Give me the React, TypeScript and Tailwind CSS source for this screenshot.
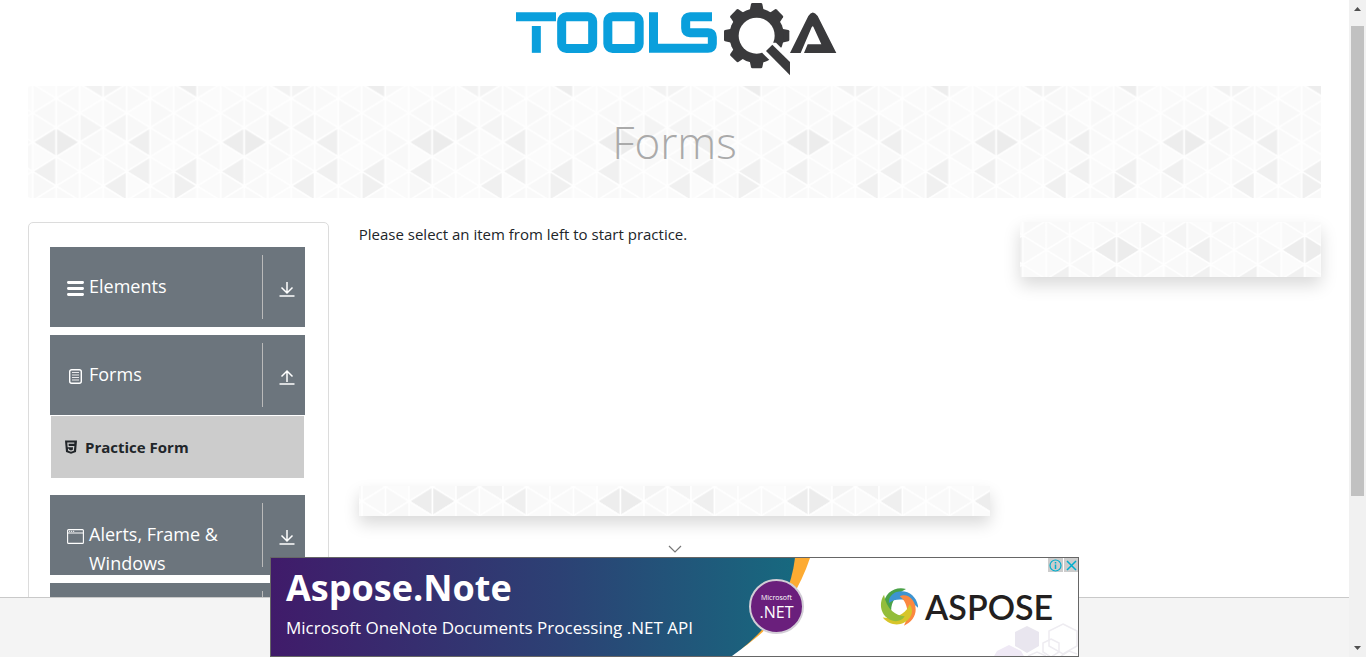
import React from "react";

const COL = 23.5;
const HALF = 14.6;

const shades: Record<string, string> = {
  "0,0,L": "#ededed",
  "1,0,R": "#ececec",
  "4,0,L": "#efefef",
  "0,2,L": "#f0f0f0",
  "4,2,L": "#f0f0f0",
  "6,2,L": "#f0f0f0",
  "3,3,L": "#f0f0f0",
  "6,3,L": "#f0f0f0",
  "6,3,R": "#f0f0f0",
  "2,-1,R": "#f4f4f4",
  "3,-1,L": "#f4f4f4",
  "2,-4,L": "#f2f2f2",
  "3,-4,R": "#f3f3f3",
  "6,-4,L": "#ededed",
};
const lightShades = ["#f9f9f9", "#fafafa", "#f9f9f9", "#fbfbfb", "#f8f8f8"];

const triangles: { points: string; fill: string }[] = [];
for (let c = 0; c < 8; c++) {
  for (let r = -5; r <= 6; r++) {
    const left = Math.abs(r) % 2 === c % 2;
    const apexX = left ? c * COL : (c + 1) * COL;
    const baseX = left ? (c + 1) * COL : c * COL;
    const y = (r + 6) * HALF;
    const key = `${c},${r},${left ? "L" : "R"}`;
    triangles.push({
      points: `${apexX},${y} ${baseX},${y - HALF} ${baseX},${y + HALF}`,
      fill: shades[key] ?? lightShades[(c * 7 + (r + 5) * 3 + c * r * r) % 5],
    });
  }
}

function TrianglePattern({ id, x, y }: { id: string; x: number; y: number }) {
  return (
    <svg className="absolute inset-0 h-full w-full" aria-hidden="true">
      <defs>
        <pattern id={id} x={x} y={y - 6 * HALF} width={COL * 8} height={HALF * 12} patternUnits="userSpaceOnUse">
          <rect width="188" height="176" fill="#fbfbfb" />
          {triangles.map((t) => (
            <polygon key={t.points} points={t.points} fill={t.fill} stroke="#fff" strokeWidth="1.6" />
          ))}
        </pattern>
      </defs>
      <rect width="100%" height="100%" fill={`url(#${id})`} />
    </svg>
  );
}

function ToolsQaLogo() {
  return (
    <svg viewBox="0 0 1050 252" className="h-[84px] w-[350px]" role="img" aria-label="ToolsQA">
      <g fill="none" stroke="#0a9fdc" strokeWidth="27">
        <path d="M48 50.500H168" />
        <path d="M109 78V158.500" />
        <rect x="185" y="50.500" width="93" height="95" rx="14" />
        <rect x="323.500" y="50.500" width="94" height="95" rx="14" />
        <path d="M460.500 37V145H624Q637 145 637 132V111Q637 98 624 98H570Q557 98 557 85V64Q557 50.500 570 50.500H636" />
      </g>
      <g fill="#3a3a3c">
        {[0, 45, 90, 135, 180, 225, 270, 315].map((a) => (
          <path key={a} d="M749 32L753 12Q754 9 757 9H783Q786 9 787 12L791 32Z" transform={`rotate(${a} 770 107)`} />
        ))}
        <circle cx="770" cy="107" r="82" />
      </g>
      <circle cx="770" cy="107" r="54" fill="#fff" />
      <path d="M805 128L828 128L880 180V250L786 158Z" fill="#fff" />
      <path d="M817 134L870 186V226L798 153Z" fill="#3a3a3c" />
      <path
        d="M870 159L925 48Q938 27 953 48L1009 159H912L923 133H964L940 80Q938 76 935 82L902 159Z"
        fill="#3a3a3c"
      />
    </svg>
  );
}

function ArrowIcon({ up = false }: { up?: boolean }) {
  return (
    <svg viewBox="0 0 16 16" className="h-4 w-4" fill="none" stroke="#fff" strokeWidth="1.5" aria-hidden="true">
      {up ? <path d="M8 13V2M2.500 7.500L8 2L13.500 7.500" /> : <path d="M8 1V12M2.500 6.500L8 12L13.500 6.500" />}
      <path d="M.5 15H15.500" />
    </svg>
  );
}

const BarsIcon = () => (
  <svg viewBox="0 0 17 17" className="h-[17px] w-[17px]" stroke="#fff" strokeWidth="2.8" strokeLinecap="round" aria-hidden="true">
    <path d="M1.400 2.500H15.600M1.400 8.500H15.600M1.400 14.500H15.600" />
  </svg>
);

const DocIcon = () => (
  <svg viewBox="0 0 17 17" className="h-[17px] w-[17px]" fill="none" stroke="#fff" aria-hidden="true">
    <rect x="2.700" y="1.700" width="11.600" height="13.600" rx="2" strokeWidth="1.400" />
    <path d="M5 4.500H12M5 7H12M5 9.500H12M5 12H12" strokeWidth="1.1" opacity=".85" />
  </svg>
);

const WindowIcon = () => (
  <svg viewBox="0 0 17 17" className="h-[17px] w-[17px]" fill="none" stroke="#fff" aria-hidden="true">
    <rect x=".6" y="1.600" width="15.800" height="13.800" rx="1" strokeWidth="1.100" />
    <path d="M.6 5H16.400" />
    <path d="M2 3.300H8" strokeDasharray="1.200 .8" />
  </svg>
);

const Html5Icon = () => (
  <svg viewBox="0 0 12 14" className="h-[14px] w-3" aria-hidden="true">
    <path d="M0 .5H12L11 12L6 13.700L1 12Z" fill="#212529" />
    <path d="M9.300 3.200H2.900L3.200 6.700H8.700L8.300 10.300L6 11L3.700 10.300L3.500 8.700" fill="none" stroke="#ccc" strokeWidth="1.200" />
  </svg>
);

function GroupHeader({ icon, label, open = false }: { icon: React.ReactNode; label: string; open?: boolean }) {
  return (
    <button
      type="button"
      aria-expanded={open}
      className="flex h-20 w-full shrink-0 items-center overflow-hidden bg-[#6c757d] pl-[17px] text-left text-white"
    >
      <span className="flex flex-1 items-start gap-[5px] self-stretch pt-[25px]">
        <span className="mt-2 shrink-0">{icon}</span>
        <span className="text-[18px] leading-[29px]">{label}</span>
      </span>
      <span className="flex h-16 w-[43px] items-center justify-center border-l border-[#bababa] pt-1 pl-[7px]">
        <ArrowIcon up={open} />
      </span>
    </button>
  );
}

function Sidebar() {
  return (
    <nav className="flex flex-col gap-2 rounded-[5px] border border-[#dcdcdc] pt-6 pr-[23px] pb-6 pl-[21px]">
      <GroupHeader icon={<BarsIcon />} label="Elements" />
      <div>
        <GroupHeader icon={<DocIcon />} label="Forms" open />
        <ul className="mb-2 p-px">
          <li>
            <a href="#practice-form" className="flex h-[62px] items-center gap-2 bg-[#ccc] pl-[14px] text-[15px] font-bold text-[#212529]">
              <Html5Icon />
              Practice Form
            </a>
          </li>
        </ul>
      </div>
      <GroupHeader icon={<WindowIcon />} label="Alerts, Frame & Windows" />
      <GroupHeader icon={<WindowIcon />} label="Widgets" />
    </nav>
  );
}

const swirlColors = ["#4aa147", "#3d94d1", "#fb8840", "#d7c52a", "#93bd3b"];

function AsposeSwirl() {
  return (
    <svg viewBox="0 0 114 114" className="h-[38px] w-[38px]" aria-hidden="true">
      {swirlColors.map((color, i) => (
        <path
          key={color}
          d="M78 3C44-6 12 16 12 50C12 64 20 78 36 82C28 56 40 22 78 3Z"
          fill={color}
          transform={`rotate(${i * 72} 57 57)`}
        />
      ))}
    </svg>
  );
}

function AdBanner() {
  return (
    <aside className="relative flex h-[100px] w-[809px] overflow-hidden border border-[#666] bg-white text-white" aria-label="Advertisement">
      <svg viewBox="0 0 807 98" className="absolute inset-0 h-full w-full" aria-hidden="true">
        <defs>
          <linearGradient id="adFill" x1="0" x2="1" y1="0" y2="0">
            <stop offset="0" stopColor="#401b6a" />
            <stop offset=".55" stopColor="#2c4174" />
            <stop offset="1" stopColor="#17697f" />
          </linearGradient>
        </defs>
        <path d="M524 0H539C526 38 506 66 470 91Z" fill="#fdab32" />
        <path d="M0 0H524C519 40 500 70 461 98H0Z" fill="url(#adFill)" />
        <path d="M756 68L768 74V88L756 95L744 88V74Z" fill="#e9e6ef" />
        <path d="M723 98L726 93L738 87L750 93L753 98Z" fill="#efe9f5" />
        <g fill="none" stroke="#eeecf1" strokeWidth="1.500">
          <path d="M792 66L806 73V88L792 96L778 88V73Z" />
          <path d="M780 81L788 85V94L780 99L772 94V85Z" />
          <path d="M757 98L766 94L775 98M790 98L798 93L806 96" />
        </g>
      </svg>
      <div className="relative w-[478px] pl-[15px]">
        <p className="mt-[6px] text-[36px] leading-[48px] font-bold">Aspose.Note</p>
        <p className="text-[17px] leading-8 whitespace-nowrap">Microsoft OneNote Documents Processing .NET API</p>
      </div>
      <div className="relative mt-[21px] flex h-[55px] w-[55px] shrink-0 flex-col items-center justify-center rounded-full border-2 border-[#d2cdd6] bg-[#6a1f7c]">
        <span className="text-[7px] leading-[10px]">Microsoft</span>
        <span className="text-[16px] leading-[18px]">.NET</span>
      </div>
      <div className="relative ml-[76px] flex items-center gap-[7px]">
        <AsposeSwirl />
        <span className="font-['Lato'] text-[34px] leading-9 font-semibold text-[#231f20]">ASPOSE</span>
      </div>
      <div className="absolute top-0 right-0 flex gap-px">
        <button type="button" aria-label="Ad information" className="flex h-[14px] w-[15px] items-center justify-center bg-[#ccc]">
          <svg viewBox="0 0 13 13" className="h-[13px] w-[13px]" fill="none" stroke="#00aecd" strokeWidth="1.200" aria-hidden="true">
            <circle cx="6.500" cy="6.500" r="5.500" />
            <path d="M6.500 5.500V10M6.500 3V4.500" strokeWidth="1.500" />
          </svg>
        </button>
        <button type="button" aria-label="Close ad" className="flex h-[14px] w-[14px] items-center justify-center bg-[#ccc]">
          <svg viewBox="0 0 13 13" className="h-[13px] w-[13px]" stroke="#00aecd" strokeWidth="1.500" aria-hidden="true">
            <path d="M2 2L11 11M11 2L2 11" />
          </svg>
        </button>
      </div>
    </aside>
  );
}

function ScrollTrack() {
  return (
    <div className="flex w-[17px] shrink-0 flex-col items-center bg-[#f1f1f1]" aria-hidden="true">
      <svg viewBox="0 0 7 4" className="mt-[7px] h-1 w-[7px]">
        <path d="M0 4L3.500 0L7 4Z" fill="#505050" />
      </svg>
      <div className="mt-[15px] h-[470px] w-[13px] bg-[#c1c1c1]" />
      <svg viewBox="0 0 7 4" className="mt-auto mb-[7px] h-1 w-[7px]">
        <path d="M0 0L3.500 4L7 0Z" fill="#505050" />
      </svg>
    </div>
  );
}

export default function App() {
  return (
    <div className="flex h-screen overflow-hidden bg-white font-['Open_Sans','Noto_Sans',sans-serif] text-[#212529]">
      <div className="relative flex min-w-0 flex-1 flex-col">
        <div className="min-h-0 flex-1 overflow-hidden">
          <header className="flex h-[86px] justify-center">
            <a href="#home" className="block">
              <ToolsQaLogo />
            </a>
          </header>
          <div className="px-7">
            <div className="relative flex h-28 items-center justify-center">
              <TrianglePattern id="bannerPattern" x={4.7} y={56.3} />
              <h1 className="relative text-[44px] leading-[56px] font-light text-[#aaa]">Forms</h1>
            </div>
            <div className="mt-6 grid grid-cols-4 items-start gap-[30px]">
              <Sidebar />
              <main className="col-span-2">
                <p className="text-[15px] leading-6">Please select an item from left to start practice.</p>
                <div className="relative mt-60 h-[30px] shadow-[0_8px_16px_rgba(0,0,0,0.15)]">
                  <TrianglePattern id="inlinePattern" x={50} y={15.3} />
                </div>
              </main>
              <div className="relative h-[55px] shadow-[0_8px_16px_rgba(0,0,0,0.15)]">
                <TrianglePattern id="sidePattern" x={73.3} y={28} />
              </div>
            </div>
          </div>
        </div>
        <footer className="h-[60px] shrink-0 border-t border-[#c9c9c9] bg-[#f4f4f4]" />
        <div className="absolute inset-x-0 bottom-0 flex flex-col items-center">
          <button type="button" aria-label="Collapse ad" className="flex h-4 w-8 items-center justify-center">
            <svg viewBox="0 0 14 8" className="h-2 w-[14px]" fill="none" stroke="#777" strokeWidth="1.200" aria-hidden="true">
              <path d="M1 1L7 7L13 1" />
            </svg>
          </button>
          <AdBanner />
        </div>
      </div>
      <ScrollTrack />
    </div>
  );
}
